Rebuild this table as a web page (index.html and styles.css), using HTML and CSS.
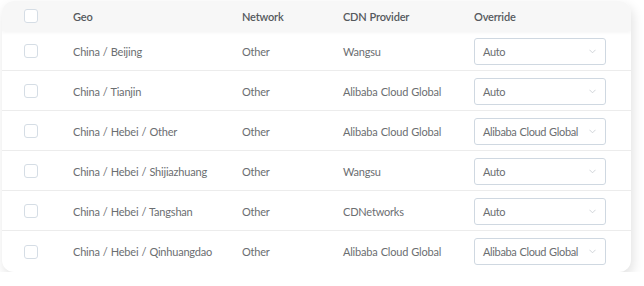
FILE: index.html
```html
<!DOCTYPE html>
<html>
<head>
<meta charset="utf-8">
<link rel="stylesheet" href="styles.css">
</head>
<body>
<div class="card">
  <div class="row head">
    <div class="cell"><span class="cb"></span></div>
    <div class="cell">Geo</div>
    <div class="cell">Network</div>
    <div class="cell">CDN Provider</div>
    <div class="cell">Override</div>
  </div>
  <div class="row">
    <div class="cell"><span class="cb"></span></div>
    <div class="cell">China / Beijing</div>
    <div class="cell">Other</div>
    <div class="cell">Wangsu</div>
    <div class="cell"><div class="sel"><span>Auto</span><svg class="chev" viewBox="0 0 8 5" width="7" height="5"><path d="M0.5 0.5 L4 4 L7.5 0.5" fill="none" stroke="#c4c9ce" stroke-width="0.9"/></svg></div></div>
  </div>
  <div class="row">
    <div class="cell"><span class="cb"></span></div>
    <div class="cell">China / Tianjin</div>
    <div class="cell">Other</div>
    <div class="cell">Alibaba Cloud Global</div>
    <div class="cell"><div class="sel"><span>Auto</span><svg class="chev" viewBox="0 0 8 5" width="7" height="5"><path d="M0.5 0.5 L4 4 L7.5 0.5" fill="none" stroke="#c4c9ce" stroke-width="0.9"/></svg></div></div>
  </div>
  <div class="row">
    <div class="cell"><span class="cb"></span></div>
    <div class="cell">China / Hebei / Other</div>
    <div class="cell">Other</div>
    <div class="cell">Alibaba Cloud Global</div>
    <div class="cell"><div class="sel"><span>Alibaba Cloud Global</span><svg class="chev" viewBox="0 0 8 5" width="7" height="5"><path d="M0.5 0.5 L4 4 L7.5 0.5" fill="none" stroke="#c4c9ce" stroke-width="0.9"/></svg></div></div>
  </div>
  <div class="row">
    <div class="cell"><span class="cb"></span></div>
    <div class="cell">China / Hebei / Shijiazhuang</div>
    <div class="cell">Other</div>
    <div class="cell">Wangsu</div>
    <div class="cell"><div class="sel"><span>Auto</span><svg class="chev" viewBox="0 0 8 5" width="7" height="5"><path d="M0.5 0.5 L4 4 L7.5 0.5" fill="none" stroke="#c4c9ce" stroke-width="0.9"/></svg></div></div>
  </div>
  <div class="row">
    <div class="cell"><span class="cb"></span></div>
    <div class="cell">China / Hebei / Tangshan</div>
    <div class="cell">Other</div>
    <div class="cell">CDNetworks</div>
    <div class="cell"><div class="sel"><span>Auto</span><svg class="chev" viewBox="0 0 8 5" width="7" height="5"><path d="M0.5 0.5 L4 4 L7.5 0.5" fill="none" stroke="#c4c9ce" stroke-width="0.9"/></svg></div></div>
  </div>
  <div class="row last">
    <div class="cell"><span class="cb"></span></div>
    <div class="cell">China / Hebei / Qinhuangdao</div>
    <div class="cell">Other</div>
    <div class="cell">Alibaba Cloud Global</div>
    <div class="cell"><div class="sel"><span>Alibaba Cloud Global</span><svg class="chev" viewBox="0 0 8 5" width="7" height="5"><path d="M0.5 0.5 L4 4 L7.5 0.5" fill="none" stroke="#c4c9ce" stroke-width="0.9"/></svg></div></div>
  </div>
</div>
</body>
</html>
```
FILE: styles.css
```css
html, body {
  margin: 0;
  padding: 0;
  background: #ffffff;
}
body {
  padding: 1px 0 0 2px;
  font-family: Lato, "Open Sans", sans-serif;
  font-size: 11px;
  letter-spacing: -0.2px;
  word-spacing: 0.5px;
  color: #6b6e71;
}
.card {
  width: 629px;
  height: 271px;
  background: #ffffff;
  border-radius: 12px;
  box-shadow: 2px 5px 12px rgba(0, 0, 0, 0.12);
  overflow: hidden;
}
.row {
  display: grid;
  grid-template-columns: 71px 169px 101px 131px 1fr;
  height: 38px;
  padding-top: 1px;
  border-bottom: 1px solid #ececec;
  align-items: center;
}
.row.last {
  border-bottom: none;
  height: 39px;
}
.head {
  height: 30px;
  padding-top: 0;
  border-bottom: none;
  background: #f7f7f7;
  color: #55595d;
  font-weight: 600;
  box-shadow: 0 2px 3px rgba(0, 0, 0, 0.04);
  position: relative;
}
.cell {
  display: flex;
  align-items: center;
}
.cell:first-child {
  padding-left: 22px;
}
.cb {
  display: block;
  width: 12px;
  height: 12px;
  border: 1px solid #d5dde5;
  border-radius: 3px;
  background: #ffffff;
}
.sel {
  box-sizing: border-box;
  width: 132px;
  height: 27px;
  border: 1px solid #cfd8e1;
  border-radius: 3px;
  display: flex;
  align-items: center;
  justify-content: space-between;
  padding: 0 9px 0 8px;
  letter-spacing: -0.35px;
  color: #6b6e71;
}
.chev {
  display: block;
  flex-shrink: 0;
}
```
